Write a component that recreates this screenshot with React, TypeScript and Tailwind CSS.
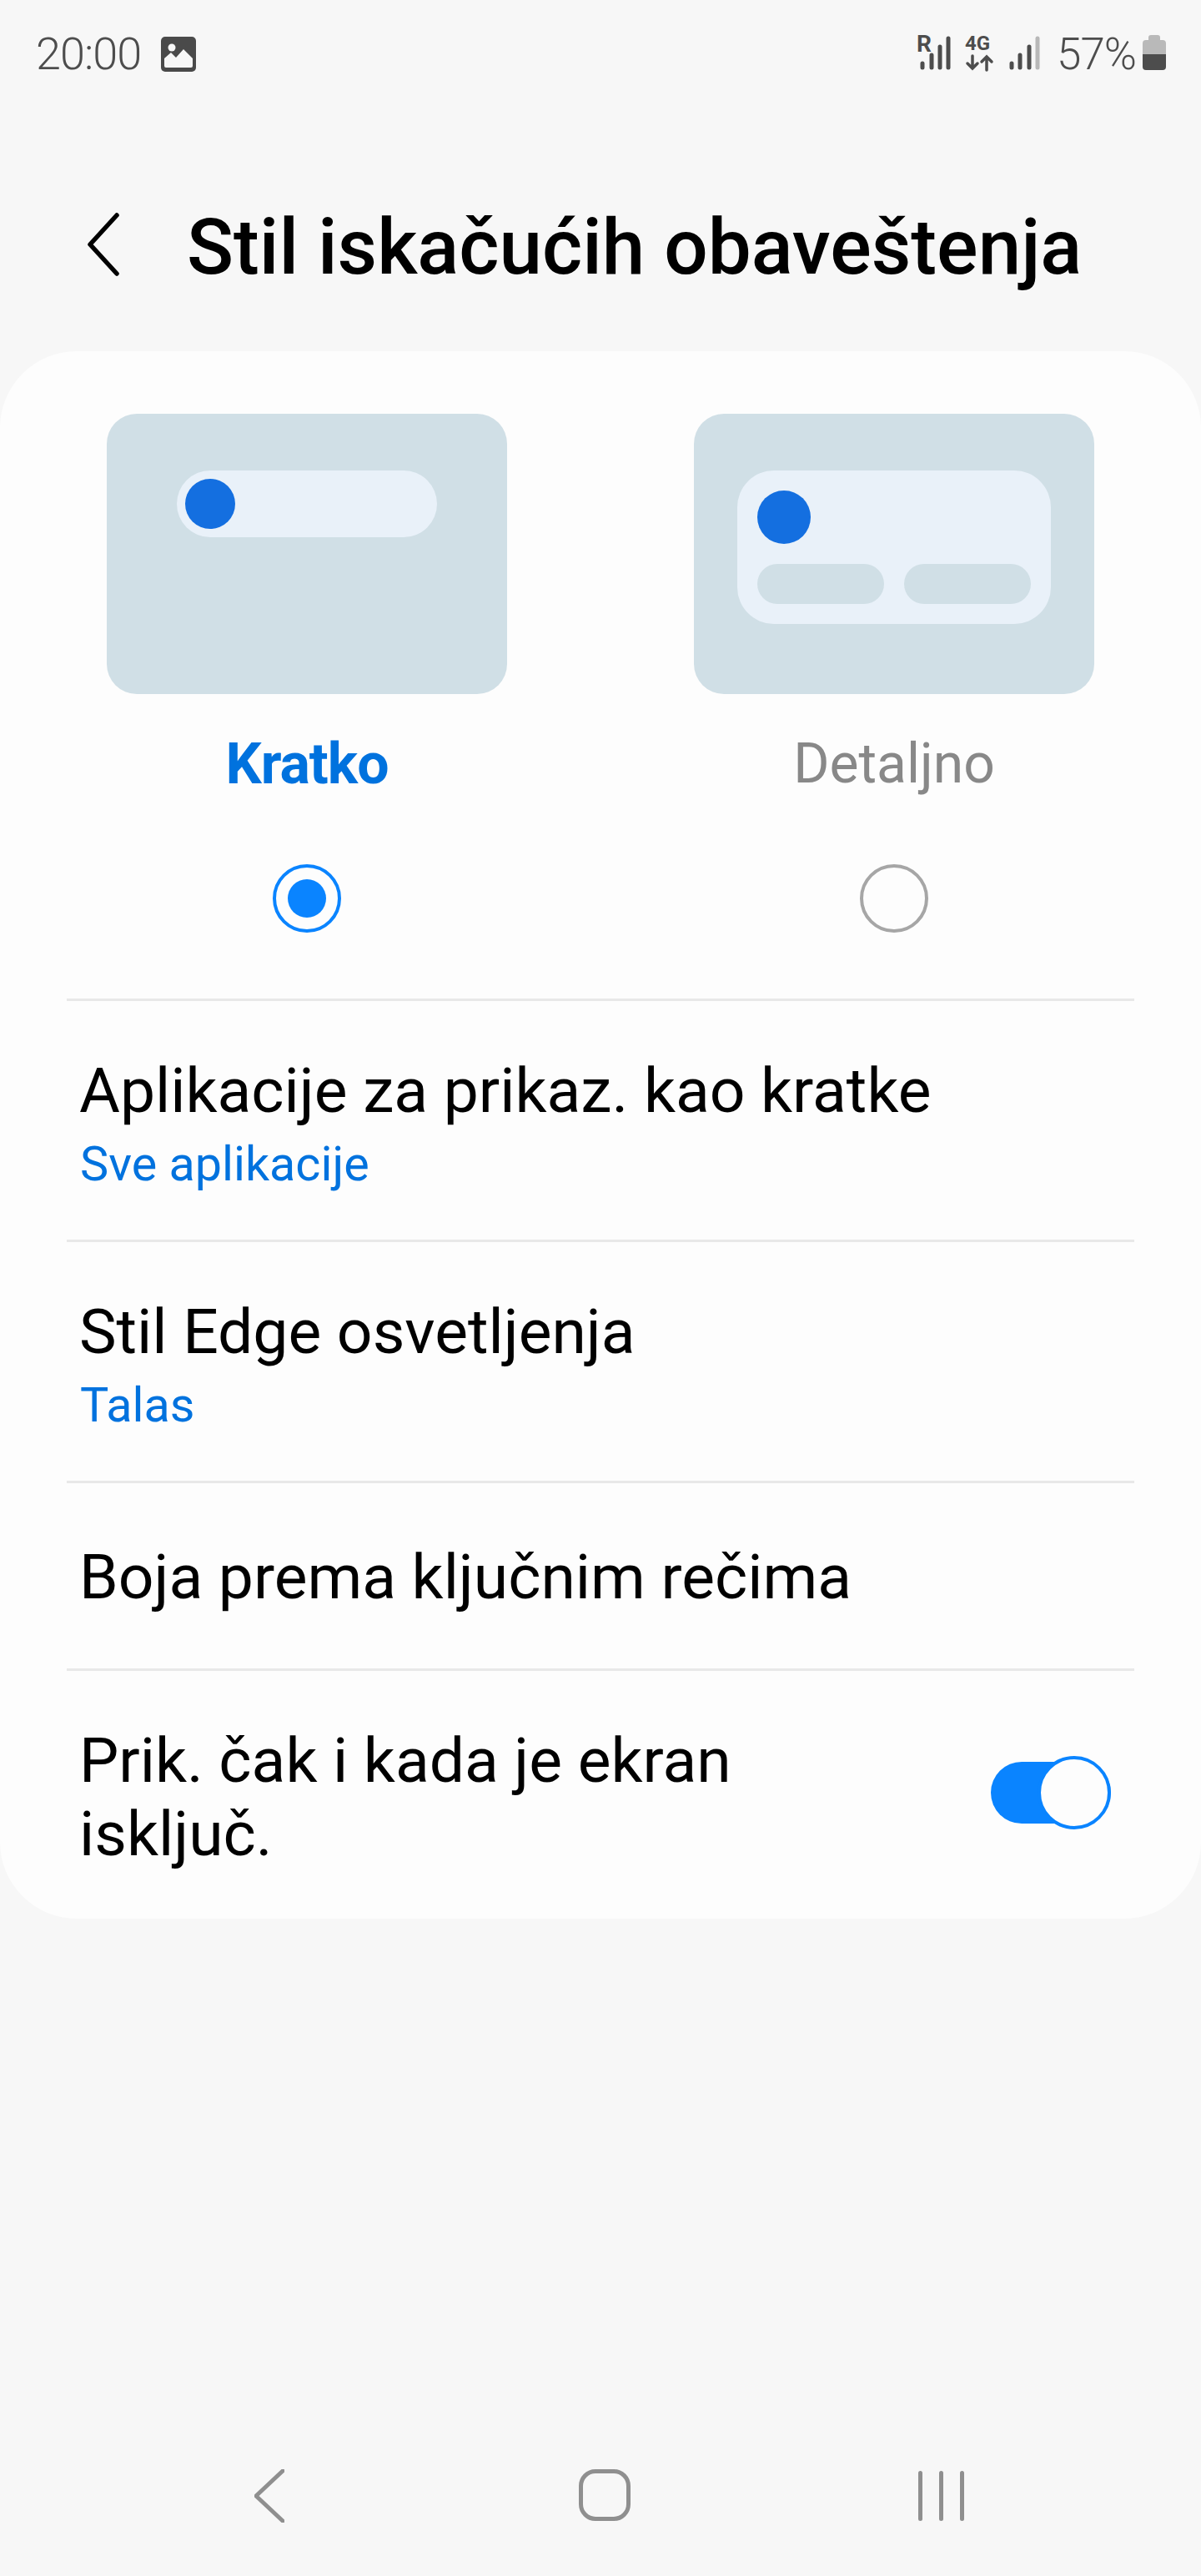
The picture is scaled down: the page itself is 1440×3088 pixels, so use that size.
const FONT = 'font-["Roboto",sans-serif]';

function StatusIcons() {
  return (
    <svg width="310" height="60" viewBox="1095 35 310 60" className="block">
      <g fill="#4d4d4d" fontFamily="Roboto, sans-serif" fontWeight="700">
        <text x="1099" y="62" fontSize="28">R</text>
        <text x="1157" y="60" fontSize="24">4G</text>
      </g>
      <g stroke="#4d4d4d" strokeWidth="5" strokeLinecap="round" fill="none">
        <path d="M1106 76v5M1117 66v15M1127 56v25M1137 46v35" />
        <path d="M1166 67v15M1160 76l6 6 6-6" strokeWidth="3.5" />
        <path d="M1183 84V68M1177 74l6-6 6 6" strokeWidth="3.5" />
        <path d="M1213 76v5M1223 66v15M1234 56v25" />
        <path d="M1244 46v35" stroke="#b8b8b8" />
      </g>
      <path d="M1377 48v-3a3 3 0 0 1 3-3h8a3 3 0 0 1 3 3v3h3a4 4 0 0 1 4 4v13h-28V52a4 4 0 0 1 4-4z" fill="#b9b9b9" />
      <path d="M1370 65h28v15a4 4 0 0 1-4 4h-20a4 4 0 0 1-4-4z" fill="#4d4d4d" />
    </svg>
  );
}

function ImageIcon() {
  return (
    <svg width="42" height="42" viewBox="0 0 42 42" className="block">
      <rect x="0" y="0" width="42" height="42" rx="5" fill="#4a4a4a" />
      <circle cx="13" cy="13" r="4.5" fill="#f7f7f7" />
      <path d="M4 26l8-7 6 6 9-10 11 11v9a2 2 0 0 1-2 2H6a2 2 0 0 1-2-2z" fill="#f7f7f7" />
    </svg>
  );
}

function Radio({ on }: { on?: boolean }) {
  return (
    <div
      className={
        on
          ? 'flex h-[82px] w-[82px] items-center justify-center rounded-full border-[4px] border-[#0a84ff]'
          : 'h-[82px] w-[82px] rounded-full border-[4px] border-[#a6a6a6]'
      }
    >
      {on ? <div className="h-[46px] w-[46px] rounded-full bg-[#0a84ff]" /> : null}
    </div>
  );
}

function Option({ label, on, children }: { label: string; on?: boolean; children: React.ReactNode }) {
  return (
    <div className="flex w-[480px] flex-col items-center">
      <div className="h-[336px] w-full rounded-[36px] bg-[#d0dfe6]">{children}</div>
      <div
        className={
          on
            ? 'mt-[52px] h-[64px] text-[68px] leading-[64px] font-bold tracking-[-1px] text-[#0072de]'
            : 'mt-[52px] h-[64px] text-[66px] leading-[64px] font-normal text-[#888888]'
        }
      >
        {label}
      </div>
      <div className="mt-[88px]">
        <Radio on={on} />
      </div>
    </div>
  );
}

function Row({ title, sub }: { title: string; sub?: string }) {
  return (
    <div className="mx-[80px] flex h-[289px] flex-col justify-center border-t-[3px] border-[#e8e8e8] px-[17px] pt-[8px]">
      <div className="-ml-[2px] text-[75px] leading-[88px] text-black">{title}</div>
      {sub ? <div className="-ml-[1px] pt-[10px] text-[57.5px] leading-[70px] text-[#0072de]">{sub}</div> : null}
    </div>
  );
}

export default function App() {
  return (
    <div className={`${FONT} flex min-h-[3088px] w-[1440px] flex-col bg-[#f7f7f7]`}>
      {/* status bar */}
      <div className="flex h-[130px] items-start justify-between pt-[35px] pl-[43px] pr-[35px]">
        <div className="flex items-center gap-[24px]">
          <span className="text-[54px] leading-[60px] font-light tracking-[-1px] text-[#4d4d4d]">20:00</span>
          <ImageIcon />
        </div>
        <div className="relative h-[60px] w-[310px]">
          <StatusIcons />
          <span className="absolute top-0 left-[172px] text-[53px] leading-[60px] font-light tracking-[-1px] text-[#4d4d4d]">
            57%
          </span>
        </div>
      </div>

      {/* header */}
      <div className="flex h-[291px] items-start pt-[125px] pl-[105px]">
        <svg width="38" height="76" viewBox="0 0 38 76" className="block" fill="none">
          <path d="M35 3L3 38l32 35" stroke="#000" strokeWidth="5.5" strokeLinecap="round" strokeLinejoin="round" />
        </svg>
        <h1 className="-mt-[6px] ml-[81px] text-[92.5px] leading-[96px] font-medium whitespace-nowrap text-black">
          Stil iskačućih obaveštenja
        </h1>
      </div>

      {/* settings card */}
      <div className="h-[1879px] rounded-[92px] bg-[#fdfdfd]">
        <div className="flex h-[776px] gap-[224px] pt-[75px] pl-[128px]">
          <Option label="Kratko" on>
            <div className="mt-[68px] ml-[84px] flex h-[80px] w-[312px] items-center rounded-full bg-[#e9f1f9] pl-[10px]">
              <div className="h-[60px] w-[60px] rounded-full bg-[#146fe0]" />
            </div>
          </Option>
          <Option label="Detaljno">
            <div className="mx-[52px] mt-[68px] flex h-[184px] flex-col gap-[24px] rounded-[44px] bg-[#e9f1f9] px-[24px] pt-[24px]">
              <div className="h-[64px] w-[64px] rounded-full bg-[#146fe0]" />
              <div className="flex gap-[24px]">
                <div className="h-[48px] w-[152px] rounded-full bg-[#d0dfe6]" />
                <div className="h-[48px] w-[152px] rounded-full bg-[#d0dfe6]" />
              </div>
            </div>
          </Option>
        </div>
        <Row title="Aplikacije za prikaz. kao kratke" sub="Sve aplikacije" />
        <Row title="Stil Edge osvetljenja" sub="Talas" />
        <div className="mx-[80px] flex h-[225px] items-center border-t-[3px] border-[#e8e8e8] px-[17px]">
          <div className="-ml-[2px] pt-[2px] text-[75px] leading-[88px] text-black">Boja prema ključnim rečima</div>
        </div>
        <div className="mx-[80px] flex h-[300px] items-start justify-between border-t-[3px] border-[#e8e8e8] pt-[63px] pr-[28px] pl-[17px]">
          <div className="-ml-[2px] w-[900px] text-[75px] leading-[88px] text-black">Prik. čak i kada je ekran isključ.</div>
          <div className="relative mt-[46px] h-[74px] w-[144px] rounded-full bg-[#0a84ff]">
            <div className="absolute top-[-7px] right-0 h-[88px] w-[88px] rounded-full border-[4px] border-[#0a84ff] bg-[#fdfdfd]" />
          </div>
        </div>
      </div>

      <div className="flex-1" />

      {/* nav bar */}
      <div className="flex h-[128px] items-start pl-[305px]">
        <svg width="36" height="64" viewBox="0 0 36 64" className="block" fill="none">
          <path d="M34 2L2 32l32 30" stroke="#8f8f8f" strokeWidth="5" strokeLinecap="round" strokeLinejoin="round" />
        </svg>
        <div className="ml-[353px] h-[62px] w-[62px] rounded-[20px] border-[5px] border-[#8f8f8f]" />
        <div className="ml-[345px] flex gap-[20px] pt-[2px]">
          <div className="h-[60px] w-[5px] rounded-full bg-[#8f8f8f]" />
          <div className="h-[60px] w-[5px] rounded-full bg-[#8f8f8f]" />
          <div className="h-[60px] w-[5px] rounded-full bg-[#8f8f8f]" />
        </div>
      </div>
    </div>
  );
}
